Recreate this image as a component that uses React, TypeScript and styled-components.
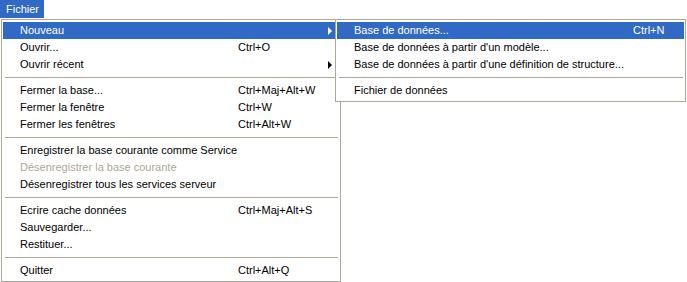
import React from 'react';
import styled, { createGlobalStyle } from 'styled-components';

interface Entry {
  label?: string;
  shortcut?: string;
  sub?: boolean;
  active?: boolean;
  disabled?: boolean;
  separator?: boolean;
}

const GlobalStyle = createGlobalStyle`
  html, body {
    margin: 0;
    padding: 0;
    background: #fff;
  }
  body {
    font-family: Tahoma, "Liberation Sans", Arial, sans-serif;
    font-size: 11px;
    color: #000;
  }
`;

const fileItems: Entry[] = [
  { label: 'Nouveau', sub: true, active: true },
  { label: 'Ouvrir...', shortcut: 'Ctrl+O' },
  { label: 'Ouvrir récent', sub: true },
  { separator: true },
  { label: 'Fermer la base...', shortcut: 'Ctrl+Maj+Alt+W' },
  { label: 'Fermer la fenêtre', shortcut: 'Ctrl+W' },
  { label: 'Fermer les fenêtres', shortcut: 'Ctrl+Alt+W' },
  { separator: true },
  { label: 'Enregistrer la base courante comme Service' },
  { label: 'Désenregistrer la base courante', disabled: true },
  { label: 'Désenregistrer tous les services serveur' },
  { separator: true },
  { label: 'Ecrire cache données', shortcut: 'Ctrl+Maj+Alt+S' },
  { label: 'Sauvegarder...' },
  { label: 'Restituer...' },
  { separator: true },
  { label: 'Quitter', shortcut: 'Ctrl+Alt+Q' },
];

const newItems: Entry[] = [
  { label: 'Base de données...', shortcut: 'Ctrl+N', active: true },
  { label: "Base de données à partir d'un modèle..." },
  { label: "Base de données à partir d'une définition de structure..." },
  { separator: true },
  { label: 'Fichier de données' },
];

const App = () => {
  const renderItems = (items: Entry[], labelWidth: number) =>
    items.map((item, index) =>
      item.separator ? (
        <Separator key={index} />
      ) : (
        <Row key={index} $active={item.active} $disabled={item.disabled} $labelWidth={labelWidth}>
          <Label>{item.label}</Label>
          <Shortcut>{item.shortcut}</Shortcut>
          <ArrowCell>{item.sub && <Arrow $active={item.active} />}</ArrowCell>
        </Row>
      )
    );

  return (
    <Page>
      <GlobalStyle />
      <MenuBar>
        <Tab>Fichier</Tab>
      </MenuBar>
      <MenuArea>
        <Menu $width={340}>{renderItems(fileItems, 218)}</Menu>
        <SubMenu $width={351}>{renderItems(newItems, 279)}</SubMenu>
      </MenuArea>
    </Page>
  );
};

export default App;

const Page = styled.div`
  width: 687px;
  height: 282px;
  overflow: hidden;
  background: #fff;
`;

const MenuBar = styled.div`
  display: flex;
  height: 18px;
`;

const Tab = styled.div`
  background: #316ac5;
  color: #fff;
  width: 44px;
  padding-left: 6px;
  box-sizing: border-box;
  line-height: 18px;
`;

const MenuArea = styled.div`
  position: relative;
  margin-top: 1px;
  margin-left: 1px;
`;

const Menu = styled.div<{ $width: number }>`
  width: ${(p) => p.$width}px;
  box-sizing: border-box;
  border: 1px solid #aca899;
  background: #fff;
  padding: 2px 1px;
  display: flex;
  flex-direction: column;
`;

const SubMenu = styled(Menu)`
  position: absolute;
  top: 0;
  left: 334px;
`;

const Row = styled.div<{ $active?: boolean; $disabled?: boolean; $labelWidth: number }>`
  display: grid;
  grid-template-columns: ${(p) => p.$labelWidth}px 1fr 4px;
  align-items: center;
  height: 17px;
  line-height: 17px;
  padding: 0 7px 0 17px;
  white-space: nowrap;
  background: ${(p) => (p.$active ? '#316ac5' : 'transparent')};
  color: ${(p) => (p.$active ? '#fff' : p.$disabled ? '#aca899' : '#000')};
`;

const Label = styled.span``;

const Shortcut = styled.span``;

const ArrowCell = styled.span`
  display: flex;
  align-items: center;
  height: 17px;
`;

const Arrow = styled.span<{ $active?: boolean }>`
  width: 0;
  height: 0;
  border-top: 4px solid transparent;
  border-bottom: 4px solid transparent;
  border-left: 4px solid ${(p) => (p.$active ? '#fff' : '#000')};
`;

const Separator = styled.div`
  height: 1px;
  margin: 4px 1px 4px 2px;
  background: #aca899;
`;
